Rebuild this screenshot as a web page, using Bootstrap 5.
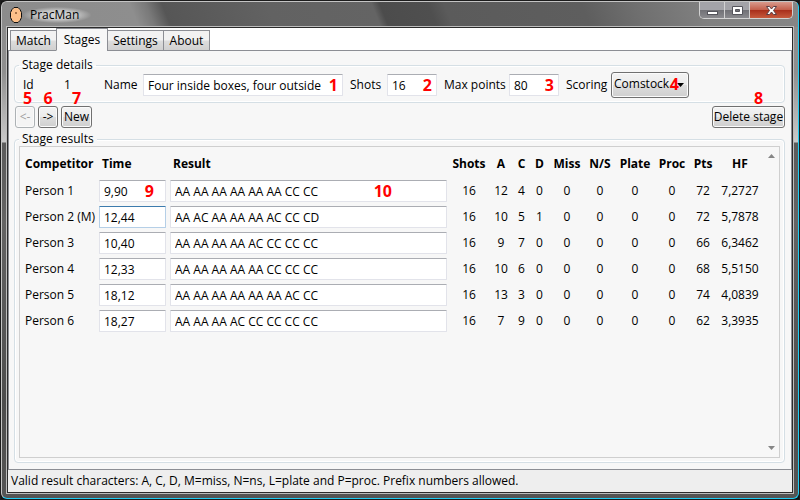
<!DOCTYPE html>
<html lang="en">
<head>
<meta charset="utf-8">
<meta name="viewport" content="width=device-width, initial-scale=1">
<title>PracMan</title>
<link href="https://cdn.jsdelivr.net/npm/bootstrap@5.3.0/dist/css/bootstrap.min.css" rel="stylesheet">
<style>
body{font-family:"Open Sans","Noto Sans",sans-serif;font-size:12px;line-height:16px;color:#000;background:#141414}

/* window frame */
.frame{min-height:100vh;border:1px solid #1c1c1c;background:#141414}
.glass{min-height:calc(100vh - 2px);border:1px solid #c4c4c4;border-right-color:#1fcdf5;border-bottom-color:#1fcdf5;border-radius:6px;padding:0 5px 5px;background:linear-gradient(#8c8c8c,#8f8f8f 70px,#c9c9c9 140px,#5b5b5b 141px,#646464 220px,#4d4d4d 400px,#555)}
.titlebar{height:25px;margin:0 -5px;padding:0 5px 0 7px;border-radius:5px 5px 0 0;background:linear-gradient(68deg,#8b8b8b 0,#8e8e8e 17%,#797979 19%,#565656 21%,#626262 34%,#646464 47%,#4c4c4c 48%,#4f4f4f 54%,#5b5b5b 56%,#5e5e5e 73%,#707070 80%,#808080 88%,#868686 100%)}
.app-title{padding:0 12px 0 7px;background:radial-gradient(ellipse at center,#d8d8d8 0,#c4c4c4 40%,transparent 72%)}
.win-buttons{height:17px;border:1px solid #d2d2d2;border-top:0;border-radius:0 0 5px 5px;overflow:hidden}
.win-buttons button{border:0;border-right:1px solid #d2d2d2;padding:0;width:25px;background:linear-gradient(#a3a3a8 0 48%,#717176 52%,#8a8a8e)}
.win-buttons .close-win{width:42px;border-right:0;background:linear-gradient(#d99a8d 0,#c4604c 48%,#a92f1c 52%,#c65a3d)}
.client{border:1px solid #2b2b2b;outline:1px solid #bdbdbd;background:#fff}

/* tabs */
.tab-strip{padding:0 2px;height:23px;margin-bottom:-1px;position:relative}
.tab-strip .nav-link{color:#000;border:1px solid #8c8e94;border-radius:0;padding:0;width:47px;height:21px;margin-right:-1px;background:linear-gradient(#f2f2f2 0 48%,#ddd 52%,#d0d0d0);line-height:20px;text-align:center}
.tab-strip .nav-link.active{height:23px;width:52px;background:#f7f7f7;border-bottom-color:#f7f7f7;line-height:22px}
.tab-strip .wide-tab{width:57px}
.pane{background:#f7f7f7;border:1px solid #8c8e94;padding:7px 6px 6px 5px}

/* group boxes */
.group{border:1px solid #d5dfe5;border-radius:4px;padding:0 4px 4px;box-shadow:inset 0 0 0 1px #fff}
.group legend{float:none;width:auto;font-size:12px;line-height:14px;margin:0;padding:0 3px}
.group-title{font-size:12px;font-weight:400;line-height:14px;margin:-8px 0 0;padding:0 3px;background:#f7f7f7}

/* controls */
.box{height:22px;width:100%;border:1px solid #e2e3ea;border-top-color:#abadb3;background:#fff;padding:0 4px;border-radius:1px;color:#000;display:block}
.box.hot{border-color:#b5cfe7;border-top-color:#3d7bad}
.push{height:22px;border:1px solid #707070;border-radius:3px;padding:0;font-size:12px;line-height:18px;color:#000;background:linear-gradient(#f3f3f3 0,#ebebeb 49%,#ddd 51%,#cfcfcf);box-shadow:inset 0 0 0 1px #fbfbfb}
.push:disabled{color:#a0a0a0;border-color:#adb2b5;background:#f4f4f4}
.push-sm{width:20px}
.push-md{width:31px}
.push-lg{width:73px}
.combo{appearance:none;width:78px;height:26px;padding:0 0 2px 2px}
.combo-arrow{right:5px;top:11px;pointer-events:none}
.w-id{width:41px}.w-val{width:40px}.w-name{width:39px}.w-title{width:200px}
.w-shots{width:44px}.w-num{width:50px}.w-max{width:72px}.w-score{width:52px}
.follow{padding-left:7px}
.toolbar{gap:3px;margin-top:3px;padding-left:1px}

/* red numbered callouts lying over the controls */
.callout-no{position:absolute;font-size:16px;font-weight:700;line-height:16px;color:#f00;pointer-events:none;top:3px;right:5px}
.callout-no.far{right:12px}
.callout-no.farther{right:55px}
.callout-no.on-combo{right:10px;top:4px}
.callout-no.above{top:-16px;right:0;left:0;text-align:center}
.callout-no.above-first{right:auto;left:8px}
.callout-no.above-last{right:auto;left:42px}

/* results */
.results-group{margin-top:11px}
.results{border:1px solid #cfcfcf}
.grid-table{width:100%;table-layout:fixed;border-collapse:collapse}
.grid-table th,.grid-table td{padding:0;text-align:center;white-space:nowrap;height:26px;vertical-align:middle}
.grid-table thead th{height:31px;padding-top:2px;font-weight:700}
.grid-table tbody th{font-weight:400}
.grid-table .start{text-align:left;padding-left:5px}
.grid-table .edit{padding:0 2px}
.c-who{width:77px}.c-time{width:71px}.c-40{width:40px}.c-24{width:24px}.c-17{width:17px}.c-19{width:19px}
.c-36{width:36px}.c-30{width:30px}.c-34{width:34px}.c-28{width:28px}.c-46{width:46px}
.scroller{width:16px}
.scroller button{border:0;background:none;padding:0;height:18px;line-height:0}
.status{padding:0 3px;background:#eee;line-height:22px}
</style>
</head>
<body>
<div class="frame">
<div class="glass d-flex flex-column">
  <header class="titlebar d-flex align-items-start justify-content-between">
    <div class="d-flex align-items-center pt-1">
      <svg width="14" height="18" viewBox="0 0 14 18" aria-hidden="true"><path d="M5 1.500h4l2 2 1.500 3v5l-1.500 3-2 2H5l-2-2-1.500-3v-5L3 3.500z" fill="#fcc08a" stroke="#111"/><path d="M6 7h2M7 6v2" stroke="#8a5a34"/></svg>
      <span class="app-title">PracMan</span>
    </div>
    <div class="win-buttons d-flex">
      <button type="button" aria-label="Minimize"><svg class="d-block mx-auto" width="13" height="15" viewBox="0 0 13 15"><rect x="1.500" y="8.500" width="10" height="3" fill="#fff" stroke="#55555c"/></svg></button>
      <button type="button" aria-label="Maximize"><svg class="d-block mx-auto" width="13" height="15" viewBox="0 0 13 15"><path d="M1.500 3.500h10v8h-10zM4.500 6.500h4v2h-4z" fill="#fff" fill-rule="evenodd" stroke="#55555c"/></svg></button>
      <button type="button" class="close-win" aria-label="Close"><svg class="d-block mx-auto" width="13" height="15" viewBox="0 0 13 15"><path d="M1.500 3.500h3l2 2.500 2-2.500h3L8.500 7.500l3 4h-3l-2-2.500-2 2.500h-3l3-4z" fill="#fff" stroke="#5c3d42"/></svg></button>
    </div>
  </header>

  <main class="client flex-grow-1 d-flex flex-column">
    <nav class="tab-strip nav align-items-end flex-nowrap" aria-label="Sections">
      <a class="nav-link" href="#match">Match</a>
      <a class="nav-link active" href="#stages" aria-current="page">Stages</a>
      <a class="nav-link wide-tab" href="#settings">Settings</a>
      <a class="nav-link" href="#about">About</a>
    </nav>

    <section class="pane flex-grow-1 d-flex flex-column" id="stages">
      <fieldset class="group">
        <legend>Stage details</legend>
        <div class="d-flex align-items-center ps-1">
          <span class="w-id">Id</span><span class="w-val">1</span>
          <label class="w-name" for="name">Name</label>
          <div class="w-title position-relative"><input class="box" id="name" value="Four inside boxes, four outside"><span class="callout-no">1</span></div>
          <label class="w-shots follow" for="shots">Shots</label>
          <div class="w-num position-relative"><input class="box" id="shots" value="16"><span class="callout-no">2</span></div>
          <label class="w-max follow text-nowrap" for="max">Max points</label>
          <div class="w-num position-relative"><input class="box" id="max" value="80"><span class="callout-no">3</span></div>
          <label class="w-score follow" for="scoring">Scoring</label>
          <div class="position-relative">
            <select class="push combo d-block" id="scoring"><option>Comstock</option></select>
            <svg class="combo-arrow position-absolute" width="7" height="4" viewBox="0 0 7 4" aria-hidden="true"><path d="M0 0h7L3.500 4z"/></svg>
            <span class="callout-no on-combo">4</span>
          </div>
        </div>
      </fieldset>

      <div class="toolbar d-flex">
        <div class="position-relative"><button type="button" class="push push-sm d-block" disabled>&lt;-</button><span class="callout-no above above-first">5</span></div>
        <div class="position-relative"><button type="button" class="push push-sm d-block">-&gt;</button><span class="callout-no above">6</span></div>
        <div class="position-relative"><button type="button" class="push push-md d-block">New</button><span class="callout-no above">7</span></div>
        <div class="position-relative ms-auto"><button type="button" class="push push-lg d-block text-nowrap">Delete stage</button><span class="callout-no above above-last">8</span></div>
      </div>

      <section class="group results-group flex-grow-1 d-flex flex-column">
        <h2 class="group-title align-self-start">Stage results</h2>
        <div class="results flex-grow-1 d-flex align-items-stretch">
          <div class="flex-grow-1">
            <table class="grid-table">
              <colgroup><col class="c-who"><col class="c-time"><col><col class="c-40"><col class="c-24"><col class="c-17"><col class="c-19"><col class="c-36"><col class="c-30"><col class="c-40"><col class="c-34"><col class="c-28"><col class="c-46"></colgroup>
              <thead><tr><th class="start">Competitor</th><th class="start">Time</th><th class="start">Result</th><th>Shots</th><th>A</th><th>C</th><th>D</th><th>Miss</th><th>N/S</th><th>Plate</th><th>Proc</th><th>Pts</th><th>HF</th></tr></thead>
              <tbody>
                <tr><th class="start" scope="row">Person 1</th><td class="edit"><div class="position-relative text-start"><input class="box" aria-label="Time, Person 1" value="9,90"><span class="callout-no far">9</span></div></td><td class="edit"><div class="position-relative text-start"><input class="box" aria-label="Result, Person 1" value="AA AA AA AA AA AA CC CC"><span class="callout-no farther">10</span></div></td><td>16</td><td>12</td><td>4</td><td>0</td><td>0</td><td>0</td><td>0</td><td>0</td><td>72</td><td>7,2727</td></tr>
                <tr><th class="start" scope="row">Person 2 (M)</th><td class="edit"><input class="box hot" aria-label="Time, Person 2" value="12,44"></td><td class="edit"><input class="box" aria-label="Result, Person 2" value="AA AC AA AA AA AC CC CD"></td><td>16</td><td>10</td><td>5</td><td>1</td><td>0</td><td>0</td><td>0</td><td>0</td><td>72</td><td>5,7878</td></tr>
                <tr><th class="start" scope="row">Person 3</th><td class="edit"><input class="box" aria-label="Time, Person 3" value="10,40"></td><td class="edit"><input class="box" aria-label="Result, Person 3" value="AA AA AA AA AC CC CC CC"></td><td>16</td><td>9</td><td>7</td><td>0</td><td>0</td><td>0</td><td>0</td><td>0</td><td>66</td><td>6,3462</td></tr>
                <tr><th class="start" scope="row">Person 4</th><td class="edit"><input class="box" aria-label="Time, Person 4" value="12,33"></td><td class="edit"><input class="box" aria-label="Result, Person 4" value="AA AA AA AA AA CC CC CC"></td><td>16</td><td>10</td><td>6</td><td>0</td><td>0</td><td>0</td><td>0</td><td>0</td><td>68</td><td>5,5150</td></tr>
                <tr><th class="start" scope="row">Person 5</th><td class="edit"><input class="box" aria-label="Time, Person 5" value="18,12"></td><td class="edit"><input class="box" aria-label="Result, Person 5" value="AA AA AA AA AA AA AC CC"></td><td>16</td><td>13</td><td>3</td><td>0</td><td>0</td><td>0</td><td>0</td><td>0</td><td>74</td><td>4,0839</td></tr>
                <tr><th class="start" scope="row">Person 6</th><td class="edit"><input class="box" aria-label="Time, Person 6" value="18,27"></td><td class="edit"><input class="box" aria-label="Result, Person 6" value="AA AA AA AC CC CC CC CC"></td><td>16</td><td>7</td><td>9</td><td>0</td><td>0</td><td>0</td><td>0</td><td>0</td><td>62</td><td>3,3935</td></tr>
              </tbody>
            </table>
          </div>
          <div class="scroller flex-shrink-0 d-flex flex-column justify-content-between">
            <button type="button" aria-label="Scroll up"><svg width="7" height="4" viewBox="0 0 7 4"><path d="M0 4h7L3.500 0z" fill="#868686"/></svg></button>
            <button type="button" aria-label="Scroll down"><svg width="7" height="4" viewBox="0 0 7 4"><path d="M0 0h7L3.500 4z" fill="#868686"/></svg></button>
          </div>
        </div>
      </section>
    </section>

    <footer class="status text-nowrap">Valid result characters: A, C, D, M=miss, N=ns, L=plate and P=proc. Prefix numbers allowed.</footer>
  </main>
</div>
</div>
</body>
</html>
